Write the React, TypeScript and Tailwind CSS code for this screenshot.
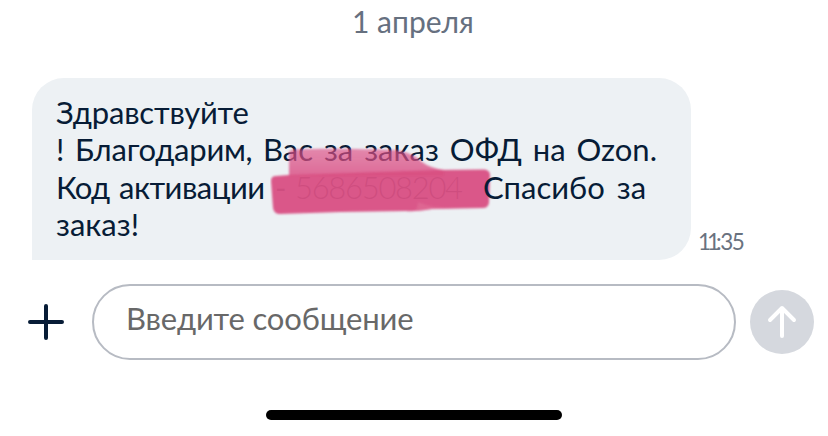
import React from 'react';

interface Chunk {
  text: string;
  style: string;
}

// each line is split where spacing changes
const lines: Chunk[][] = [
  [{ text: 'Здравствуйте', style: 'tracking-[-0.2px]' }],
  [
    { text: '! ', style: 'w-[19px]' },
    { text: 'Благодарим,', style: 'w-[188px] tracking-[-0.25px]' },
    { text: 'Вас за заказ ОФД на Ozon.', style: '[word-spacing:3px]' },
  ],
  [
    { text: 'Код ', style: 'w-[63px] tracking-[-0.8px]' },
    { text: 'активации', style: 'w-[156px] tracking-[-0.5px]' },
    { text: '-', style: 'w-[20px]' },
    { text: '5686508204', style: 'w-[188px] tracking-[-1.3px] font-light' },
    { text: 'Спасибо за', style: 'relative z-10 [word-spacing:4px]' },
  ],
  [{ text: 'заказ!', style: '' }],
];

const Scribble: React.FC = () => (
  <svg className="absolute left-[238px] top-[68px]" width="222" height="72" viewBox="270 146 222 72" fill="none">
    <defs>
      <filter id="soft" x="-5%" y="-10%" width="110%" height="120%">
        <feGaussianBlur stdDeviation="0.8" />
      </filter>
      <linearGradient id="upper" x1="0" y1="149" x2="0" y2="182" gradientUnits="userSpaceOnUse">
        <stop stopColor="#dd4f86" stopOpacity="0.65" />
        <stop offset="1" stopColor="#d94a80" stopOpacity="0.85" />
      </linearGradient>
    </defs>
    <g filter="url(#soft)">
      <path
        d="M289 153Q289 150 293 149.500C325 148 365 149 394 150C407 151 416 156 422 162Q430 168 444 170V176H289Z"
        fill="url(#upper)"
      />
      <path
        d="M271 181Q271 176 276 176L289 175C320 174 350 173 380 172L438 170L484 169.500Q490 170 490 175L489 203Q488 208 483 208L432 209Q414 212 406 211L341 212L280 214Q274 214 273 208Z"
        fill="#d94f83"
        fillOpacity="0.95"
      />
      <path d="M418 202C418 207 417 210 412 211L432 209L470 208C450 209 430 208 418 202Z" fill="#e57ba3" fillOpacity="0.4" />
    </g>
  </svg>
);

export default function App() {
  return (
    <div className="flex h-[436px] w-[828px] flex-col overflow-hidden bg-white font-[Lato,sans-serif]">
      <div className="h-[78px] pl-[352px] text-[30px] leading-[43px] text-[#66707f]">1 апреля</div>

      <div className="flex items-end pl-8">
        <div className="relative h-[182px] w-[659px] rounded-[32px] rounded-bl-none bg-[#edf1f4] pl-6 pt-4 text-[31px] leading-[37.4px] text-[#071c36]">
          {lines.map((chunks, i) => (
            <p key={i} className="flex whitespace-pre">
              {chunks.map((chunk) => (
                <span key={chunk.text} className={`shrink-0 ${chunk.style}`}>
                  {chunk.text}
                </span>
              ))}
            </p>
          ))}
          <Scribble />
        </div>
        <span className="pl-[7px] text-[22.5px] leading-[36px] tracking-[-1.5px] text-[#69727f]">
          <span className="tracking-[-4px]">11</span>:35
        </span>
      </div>

      <div className="flex items-center pl-7 pt-6">
        <svg width="36" height="36" viewBox="0 0 36 36" stroke="#071c36" strokeWidth="4" strokeLinecap="round">
          <path d="M18 2V34M2 18H34" />
        </svg>
        <div className="ml-7 h-[76px] w-[644px] rounded-full border-2 border-[#b7bbc3] pl-8 text-[31px] leading-[65px] tracking-[-0.15px] text-[#686868]">
          Введите сообщение
        </div>
        <div className="ml-[14px] flex size-16 items-center justify-center rounded-full bg-[#d5d8de]">
          <svg width="32" height="36" viewBox="0 0 32 36" fill="none" stroke="white" strokeWidth="4" strokeLinecap="round" strokeLinejoin="round">
            <path d="M16 32V4M4 16L16 4L28 16" />
          </svg>
        </div>
      </div>

      <div className="ml-[266px] mt-[50px] h-[10px] w-[296px] rounded-full bg-black" />
    </div>
  );
}
